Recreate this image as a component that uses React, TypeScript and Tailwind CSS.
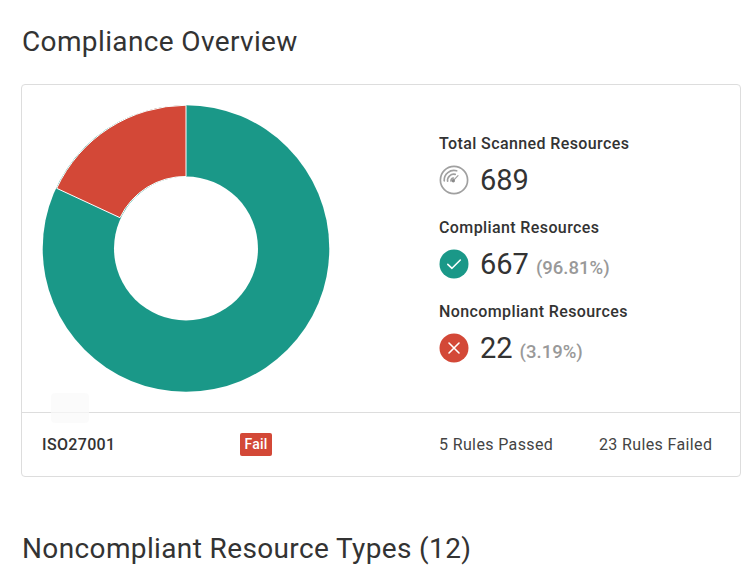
export default function App() {
  const cx = 146, cy = 146.5, R = 143.3, r = 72;
  const ax = 56.7 - 40, ay = 188.3 - 102;
  const bx = 120 - 40, by = 217.7 - 102;
  return (
    <div className="relative h-[583px] w-[756px] overflow-hidden bg-white px-[21px] pt-[23px] text-[#333] font-['Roboto',sans-serif]">
      <h1 className="h-[38px] pl-[1px] text-[28px] leading-[38px] font-normal tracking-[0.37px] text-[#333]">Compliance Overview</h1>
      <div className="relative mt-[23px] h-[393px] w-[720px] rounded-[4px] border border-[#ddd]">
        <div className="flex h-[328px] border-b border-[#ddd]">
          <div className="w-[417px] shrink-0 pl-[18px] pt-[17px]">
            <svg width="293" height="293" viewBox="0 0 293 293" className="block">
              <circle cx={cx} cy={cy} r={R} fill="#1a9888" />
              <path d={`M ${cx} ${cy - R} A ${R} ${R} 0 0 0 ${ax} ${ay} L ${bx} ${by} A ${r} ${r} 0 0 1 ${cx} ${cy - r} Z`} fill="#d34837" stroke="#fff" strokeWidth="1" />
              <circle cx={cx} cy={cy} r={r} fill="#fff" />
            </svg>
          </div>
          <div className="flex flex-col pt-[47px]">
            <Stat label="Total Scanned Resources" value="689" icon={<Radar />} />
            <Stat label="Compliant Resources" value="667" pct="(96.81%)" icon={<Check />} />
            <Stat label="Noncompliant Resources" value="22" pct="(3.19%)" icon={<Cross />} />
          </div>
        </div>
        <div className="flex h-[62px] items-center pt-[2px] text-[16px] leading-[20px] tracking-[0.37px]">
          <div className="w-[218px] pl-[20px] font-medium tracking-[0.35px] text-[#333]">ISO27001</div>
          <div className="w-[199px]">
            <span className="-mt-[2px] block w-[32px] rounded-[2px] bg-[#d34837] text-center text-[14px] font-medium leading-[23px] tracking-[0.2px] text-white">Fail</span>
          </div>
          <div className="w-[160px] text-[#444]">5 Rules Passed</div>
          <div className="w-[113px] whitespace-nowrap text-[#444]">23 Rules Failed</div>
        </div>
        <div className="absolute left-[29px] top-[308px] h-[30px] w-[38px] rounded-[4px] bg-[#fafafa] opacity-70" />
      </div>
      <h2 className="mt-[53px] pl-[1px] text-[28px] leading-[38px] font-normal tracking-[0.37px] text-[#333]">Noncompliant Resource Types (12)</h2>
    </div>
  );
}

function Stat({ label, value, pct, icon }: { label: string; value: string; pct?: string; icon: React.ReactNode }) {
  return (
    <div className="h-[84px]">
      <div className="h-[24px] text-[16px] font-medium leading-[24px] tracking-[0.39px] text-[#333]">{label}</div>
      <div className="mt-[5px] flex h-[34px] items-center gap-[11px]">
        {icon}
        <div className="mt-[4px] flex items-baseline gap-[7px]">
          <span className="text-[29px] leading-[34px] text-[#333]">{value}</span>
          {pct && <span className="text-[18.5px] font-medium leading-[24px] text-[#999]">{pct}</span>}
        </div>
      </div>
    </div>
  );
}

function Radar() {
  return (
    <svg width="30" height="30" viewBox="0 0 30 30" fill="none" stroke="#a0a0a0" strokeWidth="1.7" strokeLinecap="round" className="mt-[3px] shrink-0">
      <circle cx="15" cy="15" r="13.6" />
      <path d="M5.2 15.8 A 9.8 9.8 0 0 1 17.7 5.8" />
      <path d="M8.6 16.2 A 6.2 6.2 0 0 1 16.2 9.4" />
      <path d="M12 16 A 2.6 2.6 0 0 1 14.4 13" />
      <path d="M14.3 15.7 L 19 10.6" strokeWidth="1.2" />
      <circle cx="14.3" cy="15.7" r="1.7" fill="#8a8a8a" stroke="none" />
    </svg>
  );
}

function Check() {
  return (
    <svg width="30" height="30" viewBox="0 0 30 30" fill="none" className="mt-[3px] shrink-0">
      <circle cx="15" cy="15" r="14.5" fill="#1a9888" />
      <path d="M8.8 15.3 L 13 19.3 L 21.3 11" stroke="#fff" strokeWidth="1.6" strokeLinecap="round" strokeLinejoin="round" />
    </svg>
  );
}

function Cross() {
  return (
    <svg width="30" height="30" viewBox="0 0 30 30" fill="none" className="mt-[3px] shrink-0">
      <circle cx="15" cy="15" r="14.5" fill="#d34837" />
      <path d="M10 10 L 20 20 M 20 10 L 10 20" stroke="#fff" strokeWidth="1.6" strokeLinecap="round" />
    </svg>
  );
}
